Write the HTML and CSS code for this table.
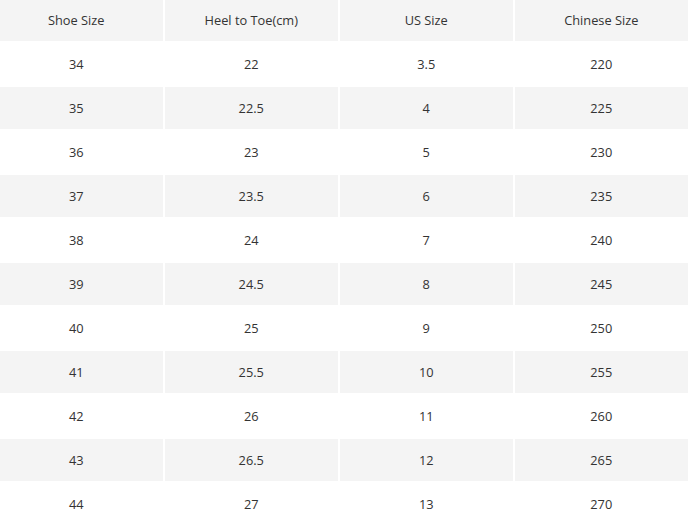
FILE: index.html
```html
<!DOCTYPE html>
<html>
<head>
<meta charset="utf-8">
<link rel="stylesheet" href="styles.css">
</head>
<body>
<div class="wrap">
  <div class="size-table">
    <div class="cell head">Shoe Size</div><div class="cell head">Heel to Toe(cm)</div><div class="cell head">US Size</div><div class="cell head">Chinese Size</div>
    <div class="cell">34</div><div class="cell">22</div><div class="cell">3.5</div><div class="cell">220</div>
    <div class="cell alt">35</div><div class="cell alt">22.5</div><div class="cell alt">4</div><div class="cell alt">225</div>
    <div class="cell">36</div><div class="cell">23</div><div class="cell">5</div><div class="cell">230</div>
    <div class="cell alt">37</div><div class="cell alt">23.5</div><div class="cell alt">6</div><div class="cell alt">235</div>
    <div class="cell">38</div><div class="cell">24</div><div class="cell">7</div><div class="cell">240</div>
    <div class="cell alt">39</div><div class="cell alt">24.5</div><div class="cell alt">8</div><div class="cell alt">245</div>
    <div class="cell">40</div><div class="cell">25</div><div class="cell">9</div><div class="cell">250</div>
    <div class="cell alt">41</div><div class="cell alt">25.5</div><div class="cell alt">10</div><div class="cell alt">255</div>
    <div class="cell">42</div><div class="cell">26</div><div class="cell">11</div><div class="cell">260</div>
    <div class="cell alt">43</div><div class="cell alt">26.5</div><div class="cell alt">12</div><div class="cell alt">265</div>
    <div class="cell">44</div><div class="cell">27</div><div class="cell">13</div><div class="cell">270</div>
  </div>
</div>
</body>
</html>
```
FILE: styles.css
```css
html, body {
  margin: 0;
  padding: 0;
  background: #ffffff;
}
.wrap {
  width: 691px;
  height: 522px;
  overflow: hidden;
}
.size-table {
  display: grid;
  grid-template-columns: repeat(4, 172.5px);
  grid-auto-rows: 42px;
  column-gap: 2.5px;
  row-gap: 2px;
  margin-left: -10px;
  margin-top: -1px;
  font-family: "Open Sans", "Noto Sans", sans-serif;
  font-size: 12.8px;
  color: #333333;
}
.cell {
  display: flex;
  align-items: center;
  justify-content: center;
  background: #ffffff;
}
.cell.head,
.cell.alt {
  background: #f4f4f4;
}
```
